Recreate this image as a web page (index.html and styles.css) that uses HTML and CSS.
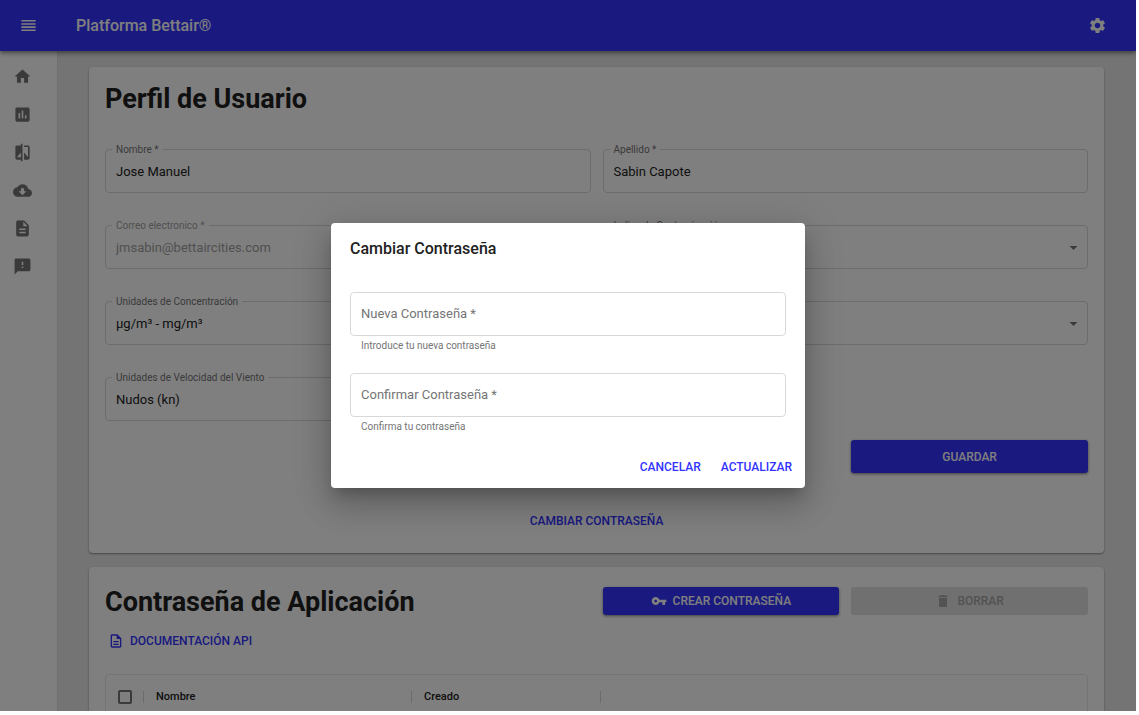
FILE: index.html
```html
<!DOCTYPE html>
<html lang="es">
<head>
<meta charset="utf-8">
<meta name="viewport" content="width=device-width, initial-scale=1">
<title>Platforma Bettair®</title>
<link rel="stylesheet" href="styles.css">
</head>
<body>
<div class="app">
  <header class="topbar">
    <button class="icon-button" type="button" aria-label="Menú">
      <svg class="icon" viewBox="0 0 24 24"><path d="M3 15h18v-2H3v2zm0 4h18v-2H3v2zm0-8h18V9H3v2zm0-6v2h18V5H3z"/></svg>
    </button>
    <span class="brand">Platforma Bettair®</span>
    <button class="icon-button" type="button" aria-label="Ajustes">
      <svg class="icon" viewBox="0 0 24 24"><path d="M19.14 12.94c.04-.3.06-.61.06-.94 0-.32-.02-.64-.07-.94l2.03-1.58c.18-.14.23-.41.12-.61l-1.92-3.32c-.12-.22-.37-.29-.59-.22l-2.39.96c-.5-.38-1.03-.7-1.62-.94l-.36-2.54c-.04-.24-.24-.41-.48-.41h-3.84c-.24 0-.43.17-.47.41l-.36 2.54c-.59.24-1.13.57-1.62.94l-2.39-.96c-.22-.08-.47 0-.59.22L2.74 8.87c-.12.21-.08.47.12.61l2.03 1.58c-.05.3-.09.63-.09.94s.02.64.07.94l-2.03 1.58c-.18.14-.23.41-.12.61l1.92 3.32c.12.22.37.29.59.22l2.39-.96c.5.38 1.03.7 1.62.94l.36 2.54c.05.24.24.41.48.41h3.84c.24 0 .44-.17.47-.41l.36-2.54c.59-.24 1.13-.56 1.62-.94l2.39.96c.22.08.47 0 .59-.22l1.92-3.32c.12-.22.07-.47-.12-.61l-2.01-1.58zM12 15.6c-1.98 0-3.6-1.62-3.6-3.6s1.62-3.6 3.6-3.6 3.6 1.62 3.6 3.6-1.62 3.6-3.6 3.6z"/></svg>
    </button>
  </header>

  <div class="body">
    <nav class="sidebar" aria-label="Principal">
      <a class="nav-link" href="#inicio" aria-label="Inicio"><svg class="icon" viewBox="0 0 24 24"><path d="M10 20v-6h4v6h5v-8h3L12 3 2 12h3v8z"/></svg></a>
      <a class="nav-link" href="#datos" aria-label="Datos"><svg class="icon" viewBox="0 0 24 24"><path d="M19 3H5c-1.1 0-2 .9-2 2v14c0 1.1.9 2 2 2h14c1.1 0 2-.9 2-2V5c0-1.1-.9-2-2-2zM9 17H7v-7h2v7zm4 0h-2V7h2v10zm4 0h-2v-4h2v4z"/></svg></a>
      <a class="nav-link" href="#comparar" aria-label="Comparar"><svg class="icon" viewBox="0 0 24 24"><path d="M10 3H5c-1.1 0-2 .9-2 2v14c0 1.1.9 2 2 2h5v2h2V1h-2v2zm0 15H5l5-6v6zm9-15h-5v2h5v13l-5-6v9h5c1.1 0 2-.9 2-2V5c0-1.1-.9-2-2-2z"/></svg></a>
      <a class="nav-link" href="#descargar" aria-label="Descargar"><svg class="icon" viewBox="0 0 24 24"><path d="M19.35 10.04C18.67 6.59 15.64 4 12 4 9.11 4 6.6 5.64 5.35 8.04 2.34 8.36 0 10.91 0 14c0 3.31 2.69 6 6 6h13c2.76 0 5-2.24 5-5 0-2.64-2.05-4.78-4.65-4.96zM17 13l-5 5-5-5h3V9h4v4h3z"/></svg></a>
      <a class="nav-link" href="#informes" aria-label="Informes"><svg class="icon" viewBox="0 0 24 24"><path d="M14 2H6c-1.1 0-1.99.9-1.99 2L4 20c0 1.1.89 2 1.99 2H18c1.1 0 2-.9 2-2V8l-6-6zm2 16H8v-2h8v2zm0-4H8v-2h8v2zm-3-5V3.5L18.5 9H13z"/></svg></a>
      <a class="nav-link" href="#avisos" aria-label="Avisos"><svg class="icon" viewBox="0 0 24 24"><path d="M20 2H4c-1.1 0-1.99.9-1.99 2L2 22l4-4h14c1.1 0 2-.9 2-2V4c0-1.1-.9-2-2-2zm-7 12h-2v-2h2v2zm0-4h-2V6h2v4z"/></svg></a>
    </nav>

    <main class="content">
      <section class="card">
        <h1 class="title profile-title">Perfil de Usuario</h1>
        <form class="profile-form">
          <div class="field">
            <label class="label" for="nombre">Nombre *</label>
            <input class="control" id="nombre" type="text" value="Jose Manuel">
          </div>
          <div class="field">
            <label class="label" for="apellido">Apellido *</label>
            <input class="control" id="apellido" type="text" value="Sabin Capote">
          </div>
          <div class="field field-disabled">
            <label class="label" for="correo">Correo electronico *</label>
            <input class="control" id="correo" type="email" value="jmsabin@bettaircities.com" disabled>
          </div>
          <div class="field">
            <label class="label" for="indice">Indice de Contaminación</label>
            <select class="control" id="indice"><option>AQI</option></select>
            <svg class="arrow" viewBox="0 0 24 24"><path d="M7 10l5 5 5-5z"/></svg>
          </div>
          <div class="field">
            <label class="label" for="concentracion">Unidades de Concentración</label>
            <select class="control" id="concentracion"><option>µg/m³ - mg/m³</option></select>
            <svg class="arrow" viewBox="0 0 24 24"><path d="M7 10l5 5 5-5z"/></svg>
          </div>
          <div class="field">
            <label class="label" for="temperatura">Temperatura</label>
            <select class="control" id="temperatura"><option>°C</option></select>
            <svg class="arrow" viewBox="0 0 24 24"><path d="M7 10l5 5 5-5z"/></svg>
          </div>
          <div class="field">
            <label class="label" for="viento">Unidades de Velocidad del Viento</label>
            <select class="control" id="viento"><option>Nudos (kn)</option></select>
            <svg class="arrow" viewBox="0 0 24 24"><path d="M7 10l5 5 5-5z"/></svg>
          </div>
        </form>
        <div class="columns save-row">
          <button class="button filled save" type="button">GUARDAR</button>
        </div>
        <div class="change-row">
          <button class="button text" type="button">CAMBIAR CONTRASEÑA</button>
        </div>
      </section>

      <section class="card">
        <div class="columns app-header">
          <h2 class="title app-title">Contraseña de Aplicación</h2>
          <button class="button filled" type="button">
            <svg class="small-icon" viewBox="0 0 24 24"><path d="M12.65 10C11.83 7.67 9.61 6 7 6c-3.31 0-6 2.69-6 6s2.69 6 6 6c2.61 0 4.83-1.67 5.65-4H17v4h4v-4h2v-4H12.65zM7 14c-1.1 0-2-.9-2-2s.9-2 2-2 2 .9 2 2-.9 2-2 2z"/></svg>
            CREAR CONTRASEÑA
          </button>
          <button class="button inactive" type="button" disabled>
            <svg class="small-icon" viewBox="0 0 24 24"><path d="M6 19c0 1.1.9 2 2 2h8c1.1 0 2-.9 2-2V7H6v12zM19 4h-3.5l-1-1h-5l-1 1H5v2h14V4z"/></svg>
            BORRAR
          </button>
        </div>
        <a class="button text docs" href="#api">
          <svg class="small-icon" viewBox="0 0 24 24"><path d="M8 16h8v2H8zm0-4h8v2H8zm6-10H6c-1.1 0-2 .9-2 2v16c0 1.1.89 2 1.99 2H18c1.1 0 2-.9 2-2V8l-6-6zm4 18H6V4h7v5h5v11z"/></svg>
          DOCUMENTACIÓN API
        </a>
        <div class="table-frame">
          <table class="table">
            <thead>
              <tr>
                <th class="col-check"><div class="head-cell"><input class="check" type="checkbox" aria-label="Seleccionar todo"></div></th>
                <th class="col-name"><div class="head-cell">Nombre</div></th>
                <th class="col-created"><div class="head-cell">Creado</div></th>
                <th></th>
              </tr>
            </thead>
          </table>
        </div>
      </section>
    </main>
  </div>

  <div class="backdrop">
    <form class="dialog" role="dialog" aria-modal="true" aria-labelledby="dialog-title">
      <h2 class="dialog-title" id="dialog-title">Cambiar Contraseña</h2>
      <div class="dialog-fields">
        <div class="field">
          <label class="label label-inside" for="nueva">Nueva Contraseña *</label>
          <input class="control" id="nueva" type="password" aria-describedby="nueva-ayuda">
          <p class="helper" id="nueva-ayuda">Introduce tu nueva contraseña</p>
        </div>
        <div class="field">
          <label class="label label-inside" for="confirmar">Confirmar Contraseña *</label>
          <input class="control" id="confirmar" type="password" aria-describedby="confirmar-ayuda">
          <p class="helper" id="confirmar-ayuda">Confirma tu contraseña</p>
        </div>
      </div>
      <div class="dialog-actions">
        <button class="button text" type="button">CANCELAR</button>
        <button class="button text" type="button">ACTUALIZAR</button>
      </div>
    </form>
  </div>
</div>
</body>
</html>
```
FILE: styles.css
```css
* {
  box-sizing: border-box;
}

body {
  height: 100vh;
  margin: 0;
  padding: 0 3px 4px 0;
  background: #fff;
  color: #212121;
  font-family: Roboto, "Liberation Sans", sans-serif;
  font-size: 13px;
}

.app {
  position: relative;
  display: flex;
  flex-direction: column;
  height: 100%;
  overflow: hidden;
  background: #e8e8e8;
}

.topbar {
  z-index: 1;
  display: flex;
  flex: none;
  align-items: center;
  height: 51px;
  padding: 0 29px 0 19px;
  background: #3333ff;
  color: #fff;
  box-shadow: 0 2px 4px rgba(0, 0, 0, 0.35), 0 1px 8px rgba(0, 0, 0, 0.2);
}

.brand {
  flex: 1;
  margin-left: 38px;
  font-size: 16px;
  font-weight: 500;
}

.icon-button {
  display: flex;
  padding: 0;
  border: 0;
  background: none;
  color: inherit;
}

.icon {
  display: block;
  width: 19px;
  height: 19px;
  fill: currentColor;
}

.body {
  display: flex;
  flex: 1;
  min-height: 0;
}

.sidebar {
  display: flex;
  flex: none;
  flex-direction: column;
  gap: 19px;
  width: 58px;
  padding: 16px 13px;
  border-right: 1px solid #e0e0e0;
  background: #fff;
}

.nav-link {
  color: #757575;
}

.content {
  display: flex;
  flex: 1;
  flex-direction: column;
  gap: 14px;
  min-width: 0;
  padding: 16px 32px 0 31px;
  overflow: hidden;
}

.card {
  flex: none;
  padding: 16px;
  border-radius: 4px;
  background: #fff;
  box-shadow: 0 1px 2px rgba(0, 0, 0, 0.4);
}

.title {
  margin: 0;
  font-size: 27px;
  font-weight: 700;
  white-space: nowrap;
}

.profile-title {
  margin-bottom: 34px;
  line-height: 32px;
}

.profile-form {
  display: grid;
  grid-template-columns: 1fr 1fr;
  gap: 32px 12px;
}

.field {
  position: relative;
}

.label {
  position: absolute;
  top: -6px;
  left: 7px;
  padding: 0 4px;
  background: #fff;
  color: #757575;
  font-size: 10px;
  line-height: 14px;
}

.label-inside {
  top: 14px;
  font-size: 13px;
  line-height: 16px;
}

.control {
  display: block;
  width: 100%;
  height: 44px;
  padding: 0 10px;
  border: 1px solid #d8d8d8;
  border-radius: 4px;
  outline: 0;
  appearance: none;
  background: #fff;
  color: #212121;
  font: inherit;
}

.field-disabled .label,
.field-disabled .control {
  color: #a0a0a0;
}

.arrow {
  position: absolute;
  top: 13px;
  right: 5px;
  width: 19px;
  height: 19px;
  fill: #757575;
  pointer-events: none;
}

.columns {
  display: grid;
  grid-template-columns: repeat(4, 1fr);
  gap: 12px;
  align-items: start;
}

.button {
  display: flex;
  align-items: center;
  justify-content: center;
  height: 28px;
  padding: 0 6px;
  border: 0;
  border-radius: 3px;
  font: 500 12px Roboto, "Liberation Sans", sans-serif;
  text-decoration: none;
  white-space: nowrap;
}

.filled {
  background: #3333ff;
  color: #fff;
  box-shadow: 0 1px 3px rgba(0, 0, 0, 0.5);
}

.inactive {
  background: #e0e0e0;
  color: #a6a6a6;
}

.text {
  background: none;
  color: #3333ff;
}

.small-icon {
  width: 16px;
  height: 16px;
  margin-right: 6px;
  fill: currentColor;
}

.save-row {
  margin-top: 19px;
}

.save {
  grid-column: 4;
  height: 33px;
}

.change-row {
  display: flex;
  justify-content: center;
  padding: 34px 0 2px;
}

.app-header {
  margin-top: 4px;
}

.app-title {
  grid-column: span 2;
  line-height: 30px;
}

.docs {
  width: max-content;
  margin: 10px 0 19px;
  padding: 0 3px;
}

.table-frame {
  border: 1px solid #e8e8e8;
  border-radius: 4px;
}

.table {
  width: 100%;
  border-collapse: collapse;
  table-layout: fixed;
  font-size: 11px;
}

.table th {
  height: 43px;
  padding: 0;
  font-weight: 500;
  text-align: left;
}

.head-cell {
  display: flex;
  align-items: center;
  height: 12px;
  padding-left: 12px;
  border-right: 1px solid #d8d8d8;
}

.col-check {
  width: 38px;
}

.col-name {
  width: 268px;
}

.col-created {
  width: 189px;
}

.check {
  flex: none;
  width: 14px;
  height: 14px;
  margin: 0;
  border: 2px solid #757575;
  border-radius: 2px;
  appearance: none;
}

.backdrop {
  position: absolute;
  z-index: 2;
  inset: 0;
  display: flex;
  align-items: center;
  justify-content: center;
  background: rgba(0, 0, 0, 0.5);
}

.dialog {
  width: 474px;
  max-width: 90%;
  padding: 13px 19px 7px;
  border-radius: 4px;
  background: #fff;
  box-shadow: 0 9px 12px -5px rgba(0, 0, 0, 0.2), 0 19px 30px 2px rgba(0, 0, 0, 0.14), 0 7px 36px 6px rgba(0, 0, 0, 0.12);
}

.dialog-title {
  margin: 0 0 31px;
  font-size: 16px;
  font-weight: 500;
  line-height: 25px;
}

.dialog-fields {
  display: grid;
  gap: 20px;
}

.helper {
  margin: 3px 11px 0;
  color: #757575;
  font-size: 10px;
  line-height: 14px;
}

.dialog-actions {
  display: flex;
  justify-content: flex-end;
  gap: 8px;
  margin: 19px -12px 0 0;
}
```
